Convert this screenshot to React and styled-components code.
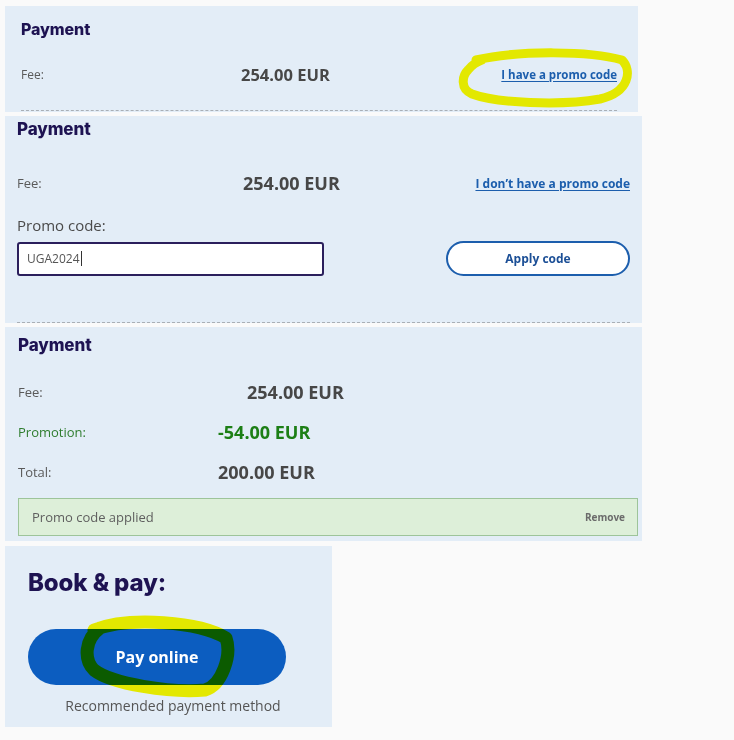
import React from 'react'
import styled, { createGlobalStyle } from 'styled-components'

const Global = createGlobalStyle`
  html, body {
    margin: 0;
    background: #fafafa;
  }
  body {
    font-family: "Open Sans", "Liberation Sans", sans-serif;
  }
`

const Page = styled.div`
  position: relative;
  width: 734px;
  height: 740px;
  padding: 6px 0 0 5px;
  box-sizing: border-box;
  display: flex;
  flex-direction: column;
  align-items: flex-start;
`

const Card = styled.section`
  width: ${p => p.$w}px;
  box-sizing: border-box;
  background: #e3edf7;
  padding: ${p => p.$pad};
  margin-bottom: ${p => p.$mb || 0}px;
  display: flex;
  flex-direction: column;
`

const Title = styled.h2`
  margin: 0;
  font-family: Inter, "Liberation Sans", sans-serif;
  font-weight: 800;
  font-size: ${p => p.$size}px;
  line-height: ${p => p.$lh}px;
  color: #1e1352;
  letter-spacing: -0.1px;
`

const Row = styled.div`
  display: flex;
  align-items: center;
  height: 24px;
  margin-top: ${p => p.$mt || 0}px;
`

const Label = styled.span`
  width: ${p => p.$w}px;
  flex: none;
  font-size: ${p => p.$size || 13}px;
  color: ${p => (p.$green ? '#2f7d2f' : '#5a5a5a')};
`

const Amount = styled.span`
  font-size: ${p => p.$size}px;
  font-weight: 700;
  color: ${p => (p.$green ? '#1d7f16' : '#474747')};
`

const PromoLink = styled.a`
  margin-left: auto;
  font-size: ${p => p.$size}px;
  font-weight: 700;
  color: #1c5ead;
  text-decoration: underline;
  text-underline-offset: 2px;
  cursor: pointer;
`

const Divider = styled.div`
  margin-top: ${p => p.$mt}px;
  border-top: 1px dashed #a9afb6;
`

const FieldLabel = styled.div`
  margin-top: 20px;
  font-size: 15px;
  line-height: 20px;
  color: #4a4a4a;
`

const FormRow = styled.div`
  display: flex;
  align-items: center;
  justify-content: space-between;
  margin-top: 6px;
`

const Field = styled.div`
  width: 307px;
  height: 34px;
  box-sizing: border-box;
  border: 2px solid #2b1f5c;
  border-radius: 3px;
  background: #fff;
  display: flex;
  align-items: center;
  padding-left: 8px;
  font-size: 12px;
  color: #555;
`

const Caret = styled.span`
  display: inline-block;
  width: 1px;
  height: 15px;
  background: #333;
  margin-left: 1px;
`

const OutlineButton = styled.button`
  width: 184px;
  height: 35px;
  border: 2px solid #1c5ead;
  border-radius: 18px;
  background: #fff;
  font-family: "Open Sans", "Liberation Sans", sans-serif;
  font-size: 12px;
  font-weight: 700;
  color: #1c4f96;
  cursor: pointer;
`

const Applied = styled.div`
  display: flex;
  align-items: center;
  justify-content: space-between;
  height: 38px;
  box-sizing: border-box;
  margin-top: 14px;
  padding: 0 12px 0 13px;
  background: #ddefd9;
  border: 1px solid #9dc49a;
  font-size: 13px;
  color: #5f5f5f;
`

const Remove = styled.span`
  font-size: 10px;
  font-weight: 700;
  color: #6b6b6b;
`

const PayButton = styled.button`
  width: 258px;
  height: 56px;
  margin-top: 31px;
  border: none;
  border-radius: 28px;
  background: #0c5dc0;
  color: #fff;
  font-family: "Open Sans", "Liberation Sans", sans-serif;
  font-size: 16px;
  font-weight: 700;
  cursor: pointer;
`

const Hint = styled.div`
  width: 290px;
  margin-top: 11px;
  text-align: center;
  font-size: 14px;
  line-height: 20px;
  color: #555;
`

const Marks = styled.svg`
  position: absolute;
  left: 0;
  top: 0;
  pointer-events: none;
  mix-blend-mode: multiply;
`

// hand-drawn highlighter loops over the screenshot
const Annotations = () => (
  <Marks width="734" height="740" viewBox="0 0 734 740">
    <g fill="none" stroke="#fffa00" strokeLinecap="round" strokeLinejoin="round">
      <path
        strokeWidth="9"
        d="M476 60 C520 50 590 51 622 60 C632 70 630 92 600 99 C560 106 496 103 472 94 C460 89 462 76 468 70 C472 65 476 62 482 60"
      />
      <path
        strokeWidth="13"
        d="M94 630 C130 616 200 622 226 638 C232 655 222 685 205 690 C170 693 112 684 94 670 C84 660 84 640 100 628"
      />
    </g>
  </Marks>
)

const App = () => {
  return (
    <>
      <Global />
      <Page>
        <Card $w={633} $pad="13px 21px 1px 16px" $mb={4}>
          <Title $size={16} $lh={20}>Payment</Title>
          <Row $mt={23}>
            <Label $w={220} $size={12}>Fee:</Label>
            <Amount $size={16.5}>254.00 EUR</Amount>
            <PromoLink $size={11.5}>I have a promo code</PromoLink>
          </Row>
          <Divider $mt={24} />
        </Card>

        <Card $w={637} $pad="2px 12px 0 12px" $mb={4}>
          <Title $size={17} $lh={22}>Payment</Title>
          <Row $mt={31}>
            <Label $w={226}>Fee:</Label>
            <Amount $size={18}>254.00 EUR</Amount>
            <PromoLink $size={12}>I don’t have a promo code</PromoLink>
          </Row>
          <FieldLabel>Promo code:</FieldLabel>
          <FormRow>
            <Field>
              UGA2024<Caret />
            </Field>
            <OutlineButton>Apply code</OutlineButton>
          </FormRow>
          <Divider $mt={46} />
        </Card>

        <Card $w={637} $pad="7px 4px 5px 13px" $mb={5}>
          <Title $size={17} $lh={22}>Payment</Title>
          <Row $mt={24}>
            <Label $w={229}>Fee:</Label>
            <Amount $size={18}>254.00 EUR</Amount>
          </Row>
          <Row $mt={16}>
            <Label $w={200} $green>Promotion:</Label>
            <Amount $size={18} $green>-54.00 EUR</Amount>
          </Row>
          <Row $mt={16}>
            <Label $w={200}>Total:</Label>
            <Amount $size={18}>200.00 EUR</Amount>
          </Row>
          <Applied>
            <span>Promo code applied</span>
            <Remove>Remove</Remove>
          </Applied>
        </Card>

        <Card $w={327} $pad="22px 14px 11px 23px">
          <Title $size={24} $lh={30}>Book &amp; pay:</Title>
          <PayButton>Pay online</PayButton>
          <Hint>Recommended payment method</Hint>
        </Card>

        <Annotations />
      </Page>
    </>
  )
}

export default App
